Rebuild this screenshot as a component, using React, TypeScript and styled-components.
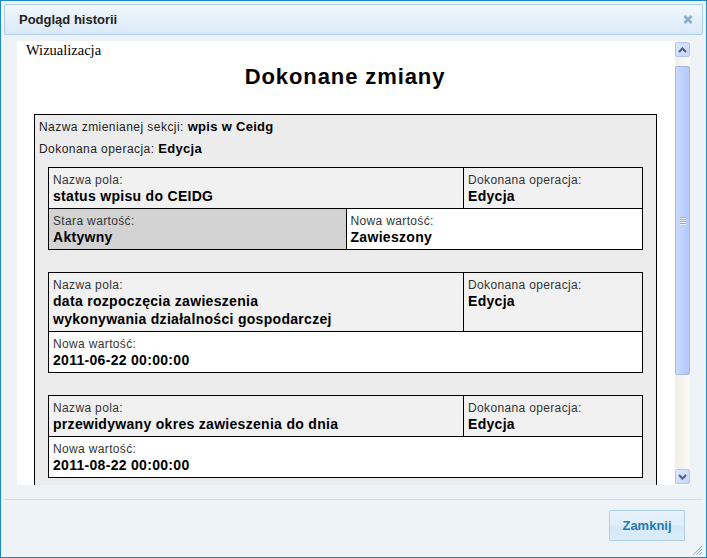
import styled, { createGlobalStyle } from "styled-components";

const GlobalStyle = createGlobalStyle`
  html, body {
    margin: 0;
    padding: 0;
    background: #ffffff;
  }
  * {
    box-sizing: border-box;
  }
`;

const Dialog = styled.div`
  position: relative;
  width: 707px;
  height: 558px;
  border: 1px solid #1a8bc8;
  padding: 3px;
  background: #eef3f7;
  display: flex;
  flex-direction: column;
  overflow: hidden;
  font-family: "Liberation Sans", Arial, sans-serif;
`;

const TitleBar = styled.div`
  flex: none;
  height: 31px;
  border: 1px solid #aed0ea;
  border-radius: 2px;
  background: linear-gradient(to bottom, #f3f8fc 0%, #e6f1fa 45%, #dbeaf7 100%);
  display: flex;
  align-items: center;
  justify-content: space-between;
  padding: 0 9px 0 14px;
`;

const Title = styled.span`
  font-size: 13px;
  font-weight: bold;
  color: #222222;
`;

const CloseButton = styled.button`
  border: none;
  background: transparent;
  padding: 0;
  width: 10px;
  height: 9px;
  display: flex;
  cursor: pointer;
`;

const Body = styled.div`
  flex: none;
  height: 444px;
  margin: 6px 13px 0;
  display: flex;
  background: #ffffff;
`;

const Viewport = styled.div`
  flex: 1;
  overflow: hidden;
  background: #ffffff;
`;

const Caption = styled.div`
  margin-left: 9px;
  padding-top: 1px;
  font-family: "Liberation Serif", "Times New Roman", serif;
  font-size: 14.5px;
  line-height: 17px;
  color: #000000;
`;

const Heading = styled.h1`
  margin: 5px 0 25px;
  text-align: center;
  font-size: 22px;
  line-height: 25px;
  font-weight: bold;
  letter-spacing: 0.9px;
  color: #000000;
`;

const SectionBox = styled.div`
  margin: 0 16px 0 17px;
  border: 1px solid #000000;
  background: #ececec;
  padding: 1px 4px 0;
`;

const InfoBlock = styled.div`
  margin-bottom: 7px;
`;

const InfoLine = styled.div`
  font-size: 12px;
  line-height: 22px;
  letter-spacing: 0.45px;
  color: #222222;

  strong {
    font-size: 13px;
    letter-spacing: 0.3px;
    color: #000000;
  }
`;

const FieldTable = styled.div`
  margin: 0 9px 22px;
  border: 1px solid #000000;
`;

const HeadRow = styled.div`
  display: grid;
  grid-template-columns: 1fr 179px;
  background: #f1f1f1;
`;

const ValueRow = styled.div<{ $split: boolean }>`
  display: grid;
  grid-template-columns: ${(p) => (p.$split ? "1fr 1fr" : "1fr")};
  border-top: 1px solid #000000;
  background: #ffffff;
`;

const Cell = styled.div<{ $shade?: string; $divider?: boolean }>`
  padding: 5px 4px 3px;
  background: ${(p) => p.$shade ?? "transparent"};
  border-left: ${(p) => (p.$divider ? "1px solid #000000" : "none")};
`;

const Label = styled.span`
  display: block;
  font-size: 12px;
  line-height: 14px;
  letter-spacing: 0.35px;
  color: #333333;
`;

const Value = styled.span`
  display: block;
  font-size: 14px;
  line-height: 18px;
  font-weight: bold;
  letter-spacing: 0.3px;
  color: #000000;
`;

const Scrollbar = styled.div`
  flex: none;
  width: 17px;
  padding: 1px 0 1px 2px;
  display: flex;
  flex-direction: column;
  background: #ffffff;
`;

const Track = styled.div`
  flex: 1;
  display: flex;
  flex-direction: column;
  background: linear-gradient(to right, #f1efe9, #fbfaf7);
`;

const ScrollButton = styled.div`
  flex: none;
  height: 15px;
  border: 1px solid #b3c6f2;
  border-radius: 2px;
  background: linear-gradient(135deg, #dfe8fd 0%, #c3d4fb 100%);
  display: flex;
  align-items: center;
  justify-content: center;
`;

const TrackGap = styled.div<{ $size?: number }>`
  flex: ${(p) => (p.$size ? `0 0 ${p.$size}px` : "1")};
`;

const Thumb = styled.div`
  flex: 0 0 309px;
  border: 1px solid #a5b9ea;
  border-radius: 2px;
  background: linear-gradient(to right, #cbdafd 0%, #bcd0fb 60%, #b4c9f8 100%);
  display: flex;
  flex-direction: column;
  align-items: center;
  justify-content: center;
  gap: 1px;
`;

const GripLine = styled.div`
  width: 6px;
  height: 1px;
  background: #8ea8e3;
  box-shadow: 0 1px 0 #eef3ff;
`;

const ButtonPane = styled.div`
  flex: none;
  margin-top: 14px;
  border-top: 1px solid #d6dee5;
  padding: 10px 18px 0;
  display: flex;
  justify-content: flex-end;
`;

const PaneButton = styled.button`
  width: 76px;
  height: 31px;
  border: 1px solid #aed0ea;
  border-radius: 1px;
  background: linear-gradient(to bottom, #e8f3fc 0%, #dfeefa 48%, #d4e8f8 52%, #dcedf9 100%);
  color: #2779aa;
  font-family: "Liberation Sans", Arial, sans-serif;
  font-size: 13px;
  font-weight: bold;
  cursor: pointer;
`;

const Grip = styled.svg`
  position: absolute;
  right: 3px;
  bottom: 1px;
`;

type Field = {
  name: string[];
  op: string;
  oldValue?: string;
  newValue: string;
};

const fields: Field[] = [
  { name: ["status wpisu do CEIDG"], op: "Edycja", oldValue: "Aktywny", newValue: "Zawieszony" },
  {
    name: ["data rozpoczęcia zawieszenia", "wykonywania działalności gospodarczej"],
    op: "Edycja",
    newValue: "2011-06-22 00:00:00",
  },
  { name: ["przewidywany okres zawieszenia do dnia"], op: "Edycja", newValue: "2011-08-22 00:00:00" },
];

const Chevron = ({ up }: { up?: boolean }) => (
  <svg width="9" height="6" viewBox="0 0 9 6">
    <path
      d={up ? "M1 5 L4.5 1.5 L8 5" : "M1 1 L4.5 4.5 L8 1"}
      fill="none"
      stroke="#4d6185"
      strokeWidth="2"
    />
  </svg>
);

function App() {
  return (
    <>
      <GlobalStyle />
      <Dialog>
        <TitleBar>
          <Title>Podgląd historii</Title>
          <CloseButton aria-label="close">
            <svg width="10" height="9" viewBox="0 0 10 9">
              <path d="M1.5 1 L8.5 8 M8.5 1 L1.5 8" stroke="#88aecb" strokeWidth="2.5" />
            </svg>
          </CloseButton>
        </TitleBar>

        <Body>
          <Viewport>
            <Caption>Wizualizacja</Caption>
            <Heading>Dokonane zmiany</Heading>
            <SectionBox>
              <InfoBlock>
                <InfoLine>
                  Nazwa zmienianej sekcji: <strong>wpis w Ceidg</strong>
                </InfoLine>
                <InfoLine>
                  Dokonana operacja: <strong>Edycja</strong>
                </InfoLine>
              </InfoBlock>
              {fields.map((f) => (
                <FieldTable key={f.name.join(" ")}>
                  <HeadRow>
                    <Cell>
                      <Label>Nazwa pola:</Label>
                      <Value>
                        {f.name.map((line, i) => (
                          <span key={line}>
                            {i > 0 && <br />}
                            {line}
                          </span>
                        ))}
                      </Value>
                    </Cell>
                    <Cell $divider>
                      <Label>Dokonana operacja:</Label>
                      <Value>{f.op}</Value>
                    </Cell>
                  </HeadRow>
                  <ValueRow $split={!!f.oldValue}>
                    {f.oldValue && (
                      <Cell $shade="#d3d3d3">
                        <Label>Stara wartość:</Label>
                        <Value>{f.oldValue}</Value>
                      </Cell>
                    )}
                    <Cell $divider={!!f.oldValue}>
                      <Label>Nowa wartość:</Label>
                      <Value>{f.newValue}</Value>
                    </Cell>
                  </ValueRow>
                </FieldTable>
              ))}
            </SectionBox>
          </Viewport>

          <Scrollbar>
            <Track>
              <ScrollButton>
                <Chevron up />
              </ScrollButton>
              <TrackGap $size={9} />
              <Thumb>
                <GripLine />
                <GripLine />
                <GripLine />
                <GripLine />
              </Thumb>
              <TrackGap />
              <ScrollButton>
                <Chevron />
              </ScrollButton>
            </Track>
          </Scrollbar>
        </Body>

        <ButtonPane>
          <PaneButton>Zamknij</PaneButton>
        </ButtonPane>

        <Grip width="11" height="11" viewBox="0 0 11 11">
          <path d="M10 1 L1 10 M10 4 L4 10 M10 7 L7 10" stroke="#7fb0d9" strokeWidth="1" />
        </Grip>
      </Dialog>
    </>
  );
}

export default App;
